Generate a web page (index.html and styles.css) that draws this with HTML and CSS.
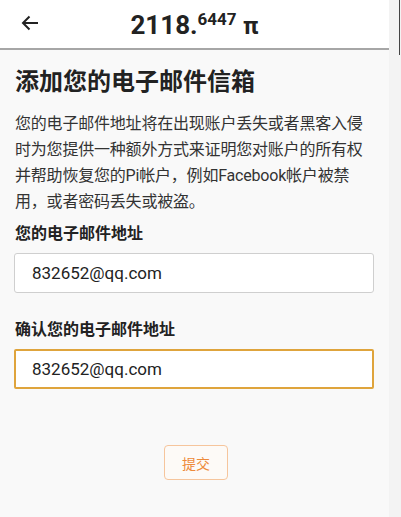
FILE: index.html
```html
<!DOCTYPE html>
<html lang="zh-CN">
<head>
    <meta charset="UTF-8">
    <meta name="viewport" content="width=device-width, initial-scale=1.0">
    <title>添加您的电子邮件信箱</title>
    <link rel="stylesheet" href="styles.css">
</head>
<body>
    <div class="page">
        <header class="top-bar">
            <span class="back">
                <svg width="18" height="16" viewBox="0 0 18 16" fill="none" stroke="#222" stroke-width="2">
                    <path d="M17 8H2M8.5 1.5L2 8l6.5 6.5"/>
                </svg>
            </span>
            <h1 class="balance">2118.<sup>6447</sup> <span class="pi">π</span></h1>
        </header>
        <main class="content">
            <h2>添加您的电子邮件信箱</h2>
            <p class="intro">您的电子邮件地址将在出现账户丢失或者黑客入侵时为您提供一种额外方式来证明您对账户的所有权并帮助恢复您的Pi帐户，例如Facebook帐户被禁用，或者密码丢失或被盗。</p>
            <form class="email-form">
                <label for="email">您的电子邮件地址</label>
                <input type="text" id="email" value="832652@qq.com">
                <label for="email-confirm" class="second">确认您的电子邮件地址</label>
                <input type="text" id="email-confirm" class="focused" value="832652@qq.com">
                <div class="actions">
                    <button type="button">提交</button>
                </div>
            </form>
        </main>
    </div>
    <div class="gutter"><span class="bar"></span></div>
</body>
</html>
```

FILE: styles.css
```css
html, body {
    height: 100%;
}
body {
    margin: 0;
    display: flex;
    font-family: Roboto, "Noto Sans CJK SC", sans-serif;
    background-color: #f9f9f9;
    color: #222;
}
.page {
    width: 389px;
    flex-shrink: 0;
}
.gutter {
    flex: 1;
    background-color: #f3f3f3;
    display: flex;
    justify-content: flex-end;
    padding-right: 1px;
}
.gutter .bar {
    width: 1px;
    height: 55px;
    background-color: #444;
}
.top-bar {
    position: relative;
    height: 48px;
    background-color: #fff;
    border-bottom: 2px solid #a6a6a6;
    display: flex;
    align-items: center;
    justify-content: center;
}
.back {
    position: absolute;
    left: 21px;
    top: 15px;
    display: flex;
}
.balance {
    margin: 0;
    font-size: 26px;
    font-weight: 700;
    color: #222;
    line-height: 1;
    padding-top: 1px;
}
.balance sup {
    font-size: 17px;
    font-weight: 700;
    vertical-align: 0;
    position: relative;
    top: -9px;
}
.balance .pi {
    font-size: 24px;
}
.content {
    padding: 16px 15px 20px 15px;
}
.content h2 {
    margin: 0 0 13px 0;
    font-size: 24px;
    font-weight: 700;
    line-height: 32px;
    color: #222;
}
.intro {
    margin: 0;
    font-size: 16px;
    line-height: 26px;
    color: #333;
    letter-spacing: -0.2px;
}
.email-form {
    display: flex;
    flex-direction: column;
}
.email-form label {
    font-size: 16px;
    font-weight: 700;
    color: #222;
    line-height: 22px;
    margin-top: 8px;
    margin-bottom: 8px;
}
.email-form label.second {
    margin-top: 26px;
}
.email-form input[type="text"] {
    box-sizing: border-box;
    width: 360px;
    margin-left: -1px;
    height: 40px;
    padding: 0 17px;
    font-family: Roboto, sans-serif;
    font-size: 17px;
    color: #222;
    background-color: #fff;
    border: 1px solid #cfcfcf;
    border-radius: 3px;
    outline: none;
}
.email-form input.focused {
    border: 2px solid #dfa43c;
    padding: 0 16px;
    border-radius: 2px;
}
.actions {
    display: flex;
    justify-content: center;
    margin-top: 56px;
}
.actions button {
    width: 64px;
    height: 35px;
    margin-left: 3px;
    font-family: "Noto Sans CJK SC", sans-serif;
    font-size: 14px;
    color: #ee8a3a;
    background-color: #fdfaf7;
    border: 1px solid #f6c59c;
    border-radius: 4px;
    cursor: pointer;
}
```
